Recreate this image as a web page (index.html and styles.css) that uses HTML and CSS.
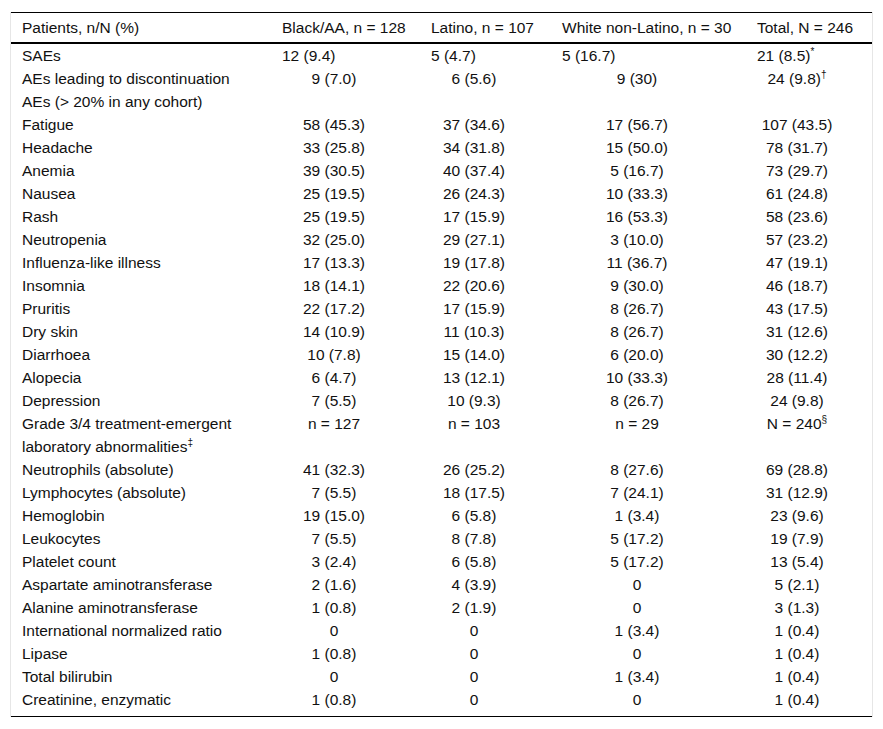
FILE: index.html
```html
<!DOCTYPE html>
<html lang="en">
<head>
<meta charset="utf-8">
<title>Adverse events table</title>
<link rel="stylesheet" href="styles.css">
</head>
<body>
<div class="wrap">
<table class="ae">
<colgroup>
<col class="c1"><col class="c2"><col class="c3"><col class="c4"><col class="c5">
</colgroup>
<thead>
<tr><th>Patients, n/N (%)</th><th>Black/AA, n = 128</th><th>Latino, n = 107</th><th>White non-Latino, n = 30</th><th>Total, N = 246</th></tr>
</thead>
<tbody>
<tr class="left"><td>SAEs</td><td>12 (9.4)</td><td>5 (4.7)</td><td>5 (16.7)</td><td>21 (8.5)<sup>*</sup></td></tr>
<tr><td>AEs leading to discontinuation</td><td>9 (7.0)</td><td>6 (5.6)</td><td>9 (30)</td><td>24 (9.8)<sup>†</sup></td></tr>
<tr><td>AEs (&gt; 20% in any cohort)</td><td></td><td></td><td></td><td></td></tr>
<tr><td>Fatigue</td><td>58 (45.3)</td><td>37 (34.6)</td><td>17 (56.7)</td><td>107 (43.5)</td></tr>
<tr><td>Headache</td><td>33 (25.8)</td><td>34 (31.8)</td><td>15 (50.0)</td><td>78 (31.7)</td></tr>
<tr><td>Anemia</td><td>39 (30.5)</td><td>40 (37.4)</td><td>5 (16.7)</td><td>73 (29.7)</td></tr>
<tr><td>Nausea</td><td>25 (19.5)</td><td>26 (24.3)</td><td>10 (33.3)</td><td>61 (24.8)</td></tr>
<tr><td>Rash</td><td>25 (19.5)</td><td>17 (15.9)</td><td>16 (53.3)</td><td>58 (23.6)</td></tr>
<tr><td>Neutropenia</td><td>32 (25.0)</td><td>29 (27.1)</td><td>3 (10.0)</td><td>57 (23.2)</td></tr>
<tr><td>Influenza-like illness</td><td>17 (13.3)</td><td>19 (17.8)</td><td>11 (36.7)</td><td>47 (19.1)</td></tr>
<tr><td>Insomnia</td><td>18 (14.1)</td><td>22 (20.6)</td><td>9 (30.0)</td><td>46 (18.7)</td></tr>
<tr><td>Pruritis</td><td>22 (17.2)</td><td>17 (15.9)</td><td>8 (26.7)</td><td>43 (17.5)</td></tr>
<tr><td>Dry skin</td><td>14 (10.9)</td><td>11 (10.3)</td><td>8 (26.7)</td><td>31 (12.6)</td></tr>
<tr><td>Diarrhoea</td><td>10 (7.8)</td><td>15 (14.0)</td><td>6 (20.0)</td><td>30 (12.2)</td></tr>
<tr><td>Alopecia</td><td>6 (4.7)</td><td>13 (12.1)</td><td>10 (33.3)</td><td>28 (11.4)</td></tr>
<tr><td>Depression</td><td>7 (5.5)</td><td>10 (9.3)</td><td>8 (26.7)</td><td>24 (9.8)</td></tr>
<tr><td>Grade 3/4 treatment-emergent laboratory abnormalities<sup>‡</sup></td><td>n = 127</td><td>n = 103</td><td>n = 29</td><td>N = 240<sup>§</sup></td></tr>
<tr><td>Neutrophils (absolute)</td><td>41 (32.3)</td><td>26 (25.2)</td><td>8 (27.6)</td><td>69 (28.8)</td></tr>
<tr><td>Lymphocytes (absolute)</td><td>7 (5.5)</td><td>18 (17.5)</td><td>7 (24.1)</td><td>31 (12.9)</td></tr>
<tr><td>Hemoglobin</td><td>19 (15.0)</td><td>6 (5.8)</td><td>1 (3.4)</td><td>23 (9.6)</td></tr>
<tr><td>Leukocytes</td><td>7 (5.5)</td><td>8 (7.8)</td><td>5 (17.2)</td><td>19 (7.9)</td></tr>
<tr><td>Platelet count</td><td>3 (2.4)</td><td>6 (5.8)</td><td>5 (17.2)</td><td>13 (5.4)</td></tr>
<tr><td>Aspartate aminotransferase</td><td>2 (1.6)</td><td>4 (3.9)</td><td>0</td><td>5 (2.1)</td></tr>
<tr><td>Alanine aminotransferase</td><td>1 (0.8)</td><td>2 (1.9)</td><td>0</td><td>3 (1.3)</td></tr>
<tr><td>International normalized ratio</td><td>0</td><td>0</td><td>1 (3.4)</td><td>1 (0.4)</td></tr>
<tr><td>Lipase</td><td>1 (0.8)</td><td>0</td><td>0</td><td>1 (0.4)</td></tr>
<tr><td>Total bilirubin</td><td>0</td><td>0</td><td>1 (3.4)</td><td>1 (0.4)</td></tr>
<tr class="last"><td>Creatinine, enzymatic</td><td>1 (0.8)</td><td>0</td><td>0</td><td>1 (0.4)</td></tr>
</tbody>
</table>
</div>
</body>
</html>
```

FILE: styles.css
```css
html, body {
  margin: 0;
  padding: 0;
  background: #ffffff;
}

body {
  font-family: "Liberation Sans", Arial, Helvetica, sans-serif;
  font-size: 15.5px;
  color: #111111;
}

.wrap {
  margin: 12px 0 0 10px;
  width: 861px;
  border-left: 1px solid #e6e6e6;
  border-right: 1px solid #e6e6e6;
}

.ae {
  width: 861px;
  border-collapse: collapse;
  table-layout: fixed;
  line-height: 23px;
}

.c1 { width: 261px; }
.c2 { width: 149px; }
.c3 { width: 131px; }
.c4 { width: 195px; }
.c5 { width: 125px; }

.ae thead tr {
  border-top: 1px solid #000000;
  border-bottom: 2px solid #000000;
}

.ae th {
  font-weight: normal;
  text-align: left;
  padding: 3px 0 3px 10px;
  white-space: nowrap;
}

.ae th:first-child {
  padding-left: 11px;
}

.ae td {
  padding: 0 35px 0 10px;
  text-align: center;
  vertical-align: top;
  white-space: nowrap;
}

.ae td:first-child {
  text-align: left;
  padding: 0 12px 0 11px;
  white-space: normal;
}

.ae tr.left td {
  text-align: left;
  padding-right: 0;
}

.ae tr.last {
  border-bottom: 1px solid #000000;
}

.ae tr.last td {
  padding-bottom: 5px;
}

.ae sup {
  font-size: 10px;
  line-height: 0;
  vertical-align: 6px;
}
```
